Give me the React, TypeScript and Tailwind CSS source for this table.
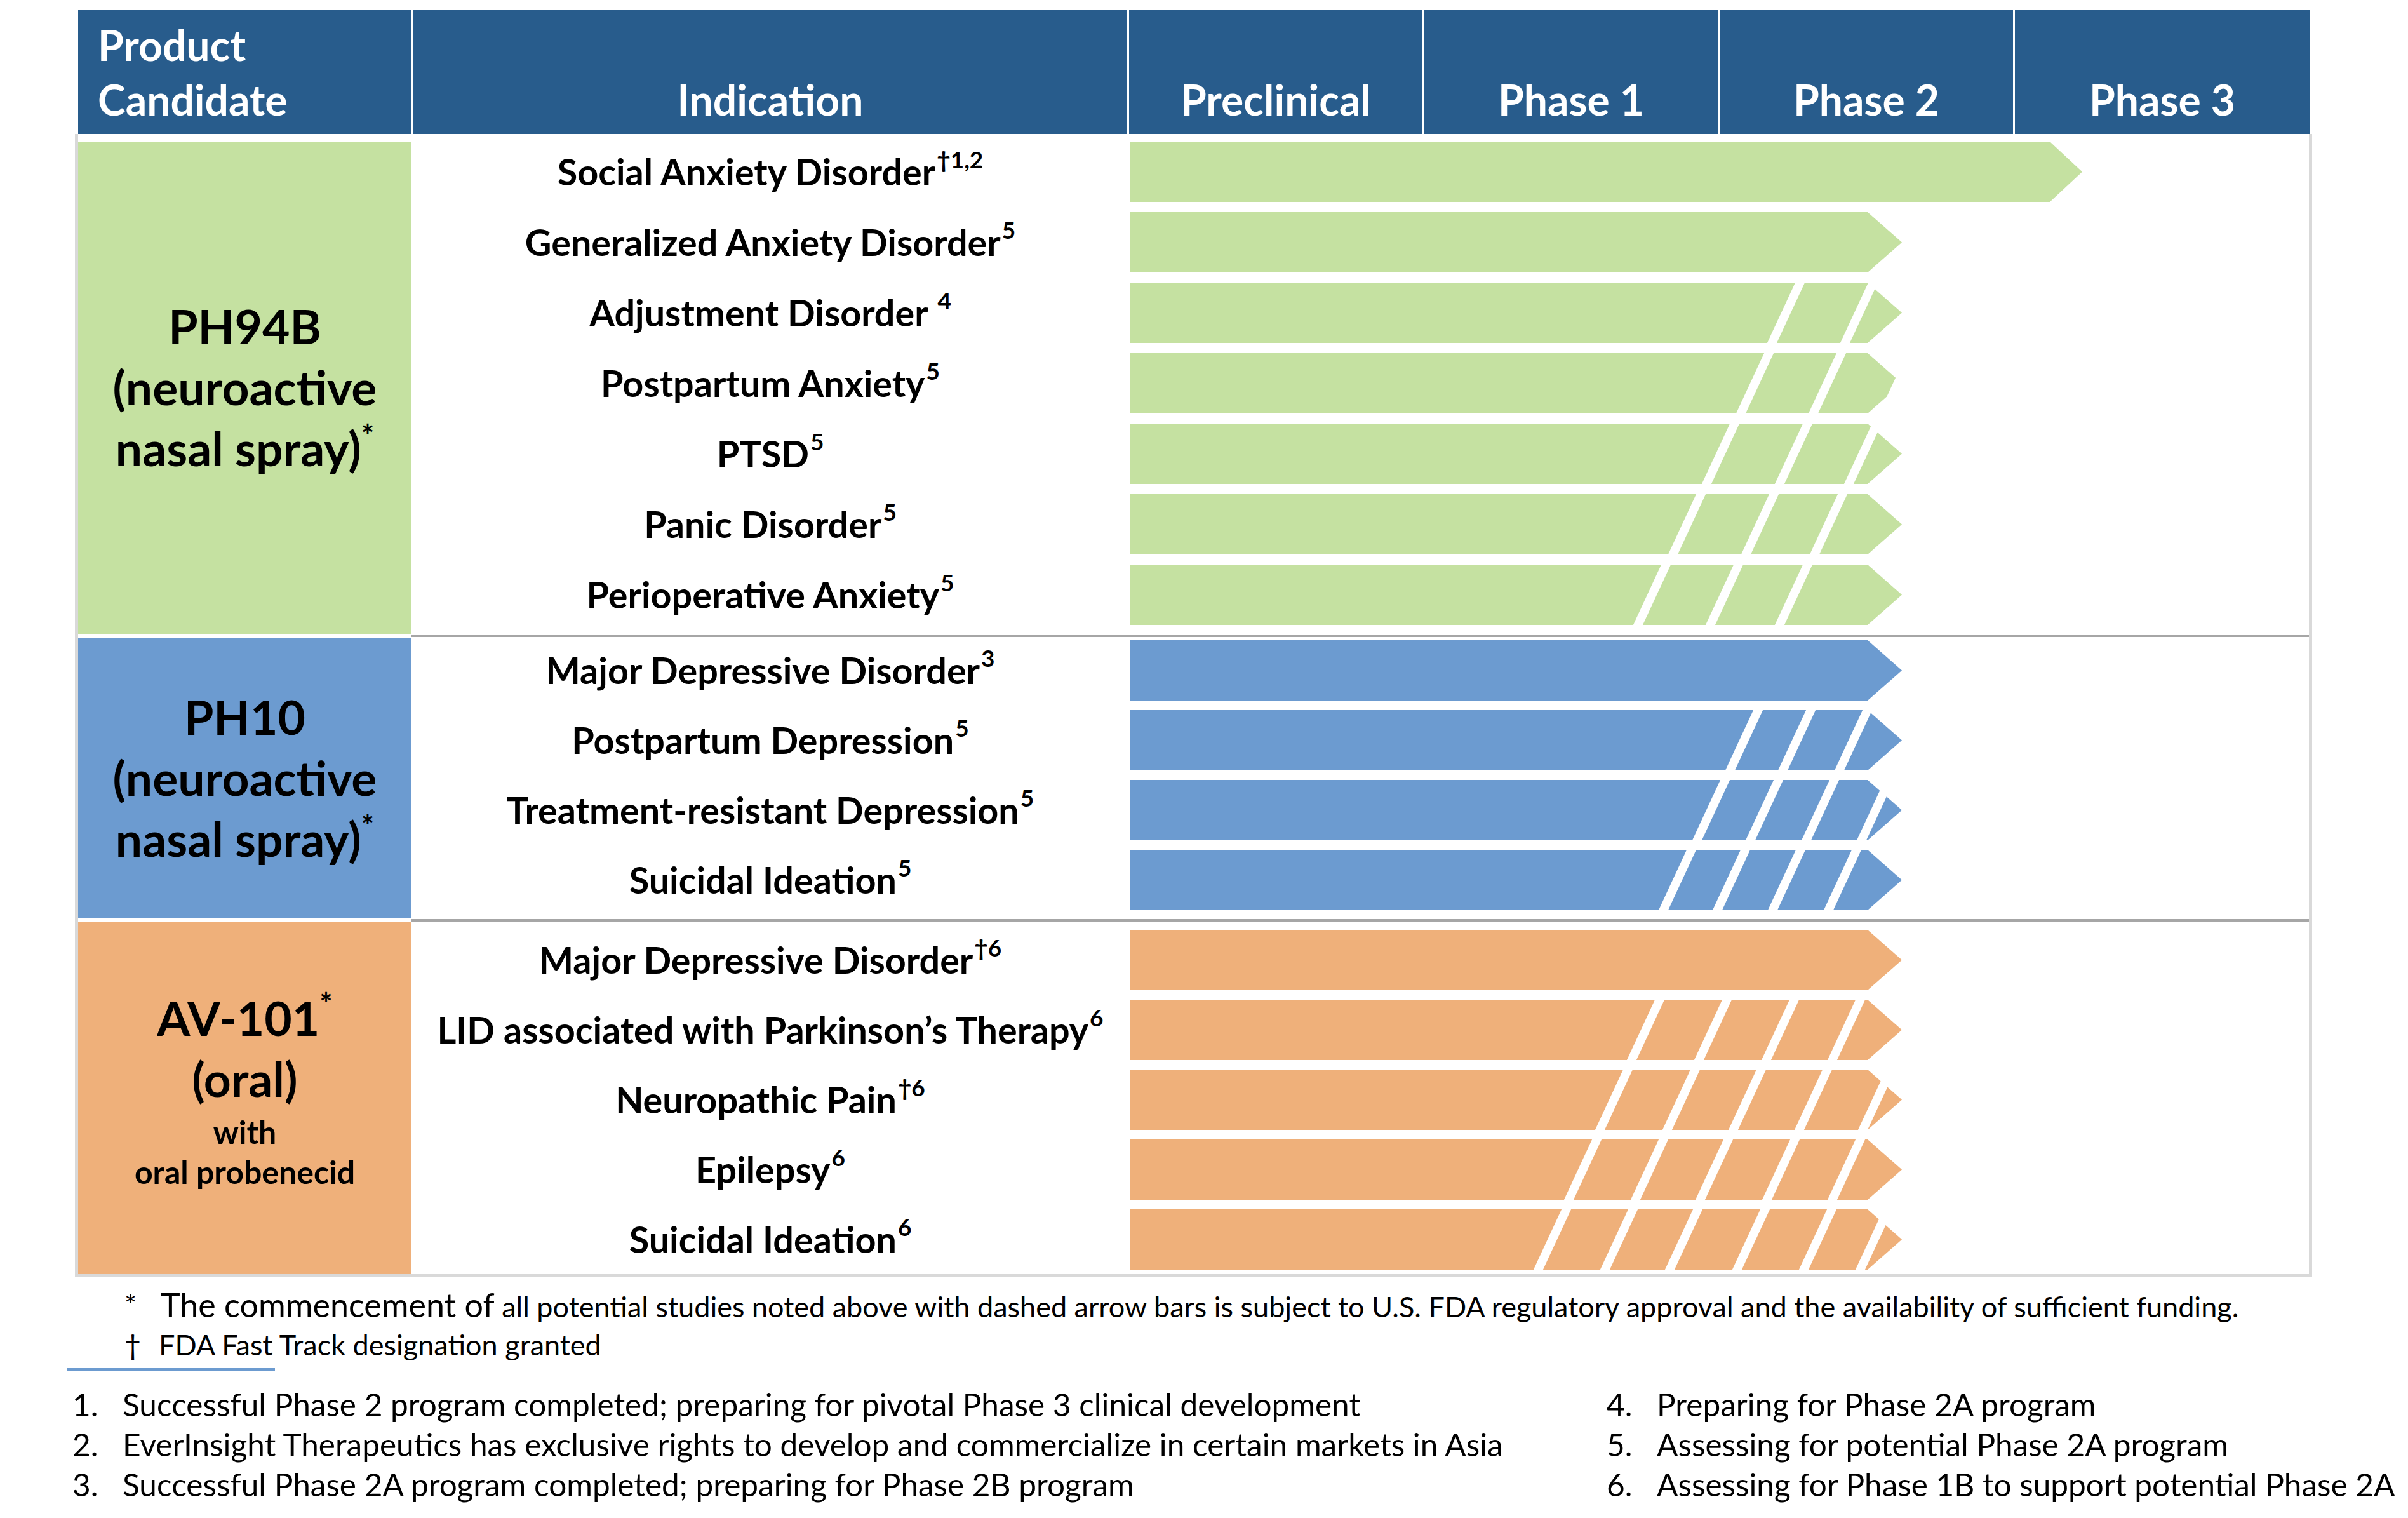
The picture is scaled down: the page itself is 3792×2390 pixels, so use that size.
import type { ReactNode } from "react";

type Row = { name: string; sup: string; end?: number; cuts?: number[] };

const GREEN = "#c5e1a1";
const BLUE = "#6c9bd0";
const ORANGE = "#efb07a";

const ph94b: Row[] = [
  { name: "Social Anxiety Disorder", sup: "†1,2", end: 1450 },
  { name: "Generalized Anxiety Disorder", sup: "5" },
  { name: "Adjustment Disorder ", sup: "4", cuts: [1004, 1119] },
  { name: "Postpartum Anxiety", sup: "5", cuts: [955, 1069, 1180] },
  { name: "PTSD", sup: "5", cuts: [901, 1016, 1125] },
  { name: "Panic Disorder", sup: "5", cuts: [848, 963, 1071] },
  { name: "Perioperative Anxiety", sup: "5", cuts: [793, 907, 1016] },
];

const ph10: Row[] = [
  { name: "Major Depressive Disorder", sup: "3" },
  { name: "Postpartum Depression", sup: "5", cuts: [938, 1021, 1110] },
  { name: "Treatment-resistant Depression", sup: "5", cuts: [886, 970, 1058, 1145] },
  { name: "Suicidal Ideation", sup: "5", cuts: [833, 918, 1005, 1093] },
];

const av101: Row[] = [
  { name: "Major Depressive Disorder", sup: "†6" },
  { name: "LID associated with Parkinson’s Therapy", sup: "6", cuts: [783, 889, 995, 1099] },
  { name: "Neuropathic Pain", sup: "†6", cuts: [733, 839, 943, 1047, 1147] },
  { name: "Epilepsy", sup: "6", cuts: [684, 789, 891, 996, 1099] },
  { name: "Suicidal Ideation", sup: "6", cuts: [636, 741, 843, 949, 1054, 1143] },
];

// arrow bar with white slanted cuts for the dashed ones
function Bar({ color, end = 1163, cuts = [] }: { color: string; end?: number; cuts?: number[] }) {
  const tip = end === 1163 ? 54 : 51;
  return (
    <svg width={1859} height={95} className="block shrink-0">
      <polygon points={`1,0 ${end},0 ${end + tip},47.5 ${end},95 1,95`} fill={color} />
      {cuts.map((x) => (
        <polygon key={x} points={`${x},97 ${x + 15},97 ${x + 61},-2 ${x + 46},-2`} fill="white" />
      ))}
    </svg>
  );
}

function Section({
  color,
  label,
  rows,
  pad,
  gap,
}: {
  color: string;
  label: ReactNode;
  rows: Row[];
  pad: string;
  gap: string;
}) {
  return (
    <div className="flex">
      <div className="flex w-[525px] shrink-0 flex-col items-center justify-center text-center font-bold text-black" style={{ backgroundColor: color }}>
        {label}
      </div>
      <div className={`flex flex-1 flex-col ${pad} ${gap}`}>
        {rows.map((r) => (
          <div key={r.name + r.sup} className="flex h-[95px] items-center">
            <div className="w-[1130px] shrink-0 text-center text-[57.5px] font-bold text-black">
              {r.name}
              <span className="relative -top-[27px] ml-[2px] text-[37px] leading-none">{r.sup}</span>
            </div>
            <Bar color={color} end={r.end} cuts={r.cuts} />
          </div>
        ))}
      </div>
    </div>
  );
}

function Divider({ h }: { h: string }) {
  return (
    <div className={`flex ${h}`}>
      <div className="w-[525px]" />
      <div className="mt-[1px] h-[4px] flex-1 bg-[#a6a6a6]" />
    </div>
  );
}

export default function App() {
  return (
    <div className="h-[2390px] w-[3792px] bg-white pt-[16px] font-['Lato',sans-serif] text-black">
      <div className="ml-[118px] w-[3523px]">
        {/* header */}
        <div className="ml-[5px] flex h-[195px] w-[3514px] gap-[3px] text-[66px] font-bold leading-[86px] text-white">
          <div className="flex w-[525px] items-end bg-[#285c8c] pb-[11px] pl-[31px]">
            Product
            <br />
            Candidate
          </div>
          <div className="flex w-[1124px] items-end justify-center bg-[#285c8c] pb-[11px]">Indication</div>
          {["Preclinical", "Phase 1", "Phase 2", "Phase 3"].map((p, i) => (
            <div key={p} className={`flex ${i === 3 ? "w-[464px]" : "w-[462px]"} items-end justify-center bg-[#285c8c] pb-[11px]`}>
              {p}
            </div>
          ))}
        </div>

        {/* body */}
        <div className="border-x-[5px] border-b-[5px] border-[#d9d9d9] pt-[12px]">
          <Section
            color={GREEN}
            rows={ph94b}
            pad="pb-[14px]"
            gap="gap-[16px]"
            label={
              <div className="pb-[4px] text-[75px] leading-[96px]">
                PH94B
                <br />
                (neuroactive
                <br />
                nasal spray)<span className="relative -top-[31px] text-[48px] leading-none">*</span>
              </div>
            }
          />
          <Divider h="h-[6px]" />
          <Section
            color={BLUE}
            rows={ph10}
            pad="pt-[4px] pb-[13px]"
            gap="gap-[15px]"
            label={
              <div className="pb-[2px] text-[75px] leading-[96px]">
                PH10
                <br />
                (neuroactive
                <br />
                nasal spray)<span className="relative -top-[31px] text-[48px] leading-none">*</span>
              </div>
            }
          />
          <Divider h="h-[5px]" />
          <Section
            color={ORANGE}
            rows={av101}
            pad="pt-[13px] pb-[7px]"
            gap="gap-[15px]"
            label={
              <div className="pb-[26px]">
                <div className="text-[75px] leading-[96px]">
                  AV-101<span className="relative -top-[33px] text-[48px] leading-none">*</span>
                  <br />
                  (oral)
                </div>
                <div className="mt-[5px] text-[50px] leading-[63px]">
                  with
                  <br />
                  oral probenecid
                </div>
              </div>
            }
          />
        </div>
      </div>

      {/* footnotes */}
      <div className="ml-[196px] mt-[13px] text-[45px] leading-[60px]">
        <div className="flex">
          <span className="w-[57px] shrink-0">*</span>
          <span>
            <span className="text-[52px]">The commencement of</span> all potential studies noted above with dashed arrow bars
            is subject to U.S. FDA regulatory approval and the availability of sufficient funding.
          </span>
        </div>
        <div className="flex">
          <span className="w-[54px] shrink-0">†</span>
          <span>FDA Fast Track designation granted</span>
        </div>
      </div>
      <div className="ml-[106px] mt-[7px] h-[4px] w-[327px] bg-[#6c9bd0]" />

      <div className="mt-[22px] flex text-[49.5px] leading-[63px]">
        <ol className="ml-[114px] w-[2416px]">
          {[
            "Successful Phase 2 program completed; preparing for pivotal Phase 3 clinical development",
            "EverInsight Therapeutics has exclusive rights to develop and commercialize in certain markets in Asia",
            "Successful Phase 2A program completed; preparing for Phase 2B program",
          ].map((t, i) => (
            <li key={t} className="flex">
              <span className="w-[79px] shrink-0">{i + 1}.</span>
              <span>{t}</span>
            </li>
          ))}
        </ol>
        <ol>
          {[
            "Preparing for Phase 2A program",
            "Assessing for potential Phase 2A program",
            "Assessing for Phase 1B to support potential Phase 2A",
          ].map((t, i) => (
            <li key={t} className="flex">
              <span className="w-[79px] shrink-0">{i + 4}.</span>
              <span>{t}</span>
            </li>
          ))}
        </ol>
      </div>
    </div>
  );
}
